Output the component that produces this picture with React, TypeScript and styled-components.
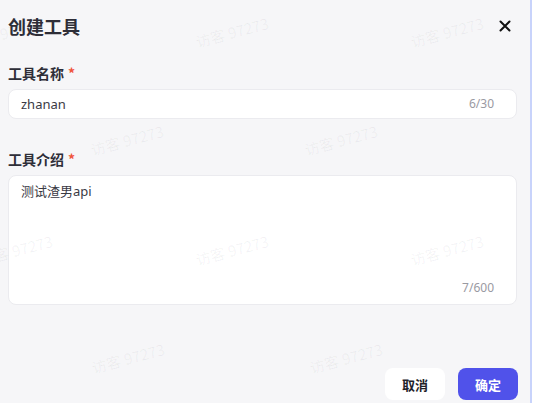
import React from "react";
import styled, { createGlobalStyle } from "styled-components";

const Global = createGlobalStyle`
  html, body { margin: 0; padding: 0; background: #ffffff; }
  body { font-family: "Noto Sans", "Noto Sans CJK SC", sans-serif; }
  * { box-sizing: border-box; }
`;

const Frame = styled.div`
  position: relative;
  width: 532px;
  height: 403px;
  background: #f6f6f8;
  border-right: 2px solid #c8d3fb;
  overflow: hidden;
  display: flex;
  flex-direction: column;
  padding: 14px 13px 3px 8px;
`;

const Header = styled.div`
  display: flex;
  align-items: center;
  justify-content: space-between;
  height: 24px;
`;

const Title = styled.h1`
  margin: 0;
  font-size: 18px;
  line-height: 24px;
  font-weight: 700;
  color: #2e2e38;
  font-family: "Noto Sans CJK SC", sans-serif;
`;

const Close = styled.button`
  border: none;
  background: none;
  padding: 0;
  margin-right: 5px;
  width: 14px;
  height: 14px;
  display: flex;
  align-items: center;
  justify-content: center;
  cursor: pointer;
`;

const Label = styled.div<{ $top: number }>`
  margin-top: ${(p) => p.$top}px;
  font-size: 14px;
  line-height: 20px;
  font-weight: 700;
  color: #2e2e38;
  font-family: "Noto Sans CJK SC", sans-serif;
  display: flex;
  align-items: center;
  gap: 4px;
`;

const Star = styled.span`
  color: #f0543c;
  font-size: 14px;
  font-weight: 700;
`;

const Field = styled.div<{ $height: number; $multi?: boolean }>`
  position: relative;
  margin-top: 6px;
  height: ${(p) => p.$height}px;
  background: #ffffff;
  border: 1px solid #ebebef;
  border-radius: 8px;
  padding: ${(p) => (p.$multi ? "6px 22px 0 12px" : "0 22px 0 12px")};
  display: flex;
  align-items: ${(p) => (p.$multi ? "flex-start" : "center")};
  justify-content: space-between;
`;

const Value = styled.span`
  font-size: 13px;
  line-height: 18px;
  color: #3a3a44;
  font-family: "Noto Sans", "Noto Sans CJK SC", sans-serif;
`;

const Count = styled.span<{ $multi?: boolean }>`
  font-size: 12px;
  line-height: 16px;
  color: #9a9aa2;
  font-family: "Noto Sans", sans-serif;
  ${(p) => (p.$multi ? "position: absolute; right: 22px; bottom: 8px;" : "")}
`;

const Footer = styled.div`
  margin-top: auto;
  display: flex;
  justify-content: flex-end;
  gap: 13px;
  padding-right: -1px;
  margin-right: -1px;
`;

const Button = styled.button<{ $primary?: boolean }>`
  width: 60px;
  height: 32px;
  border-radius: 8px;
  border: none;
  font-size: 13px;
  font-weight: 700;
  font-family: "Noto Sans CJK SC", sans-serif;
  background: ${(p) => (p.$primary ? "#5052ea" : "#ffffff")};
  color: ${(p) => (p.$primary ? "#ffffff" : "#22222a")};
  cursor: pointer;
`;

const Watermark = styled.span`
  position: absolute;
  transform: translate(-50%, -50%) rotate(-15deg);
  font-size: 15px;
  font-family: "Noto Sans CJK SC", sans-serif;
  color: rgba(60, 60, 80, 0.06);
  white-space: nowrap;
  pointer-events: none;
  user-select: none;
`;

const marks = [
  [4, 33],
  [232, 32],
  [447, 32],
  [127, 140],
  [341, 140],
  [16, 250],
  [232, 250],
  [447, 250],
  [128, 358],
  [346, 358],
];

export default function App() {
  return (
    <>
      <Global />
      <Frame>
        <Header>
          <Title>创建工具</Title>
          <Close aria-label="关闭">
            <svg width="12" height="12" viewBox="0 0 12 12">
              <path d="M1.5 1.5 L10.5 10.5 M10.5 1.5 L1.5 10.5" stroke="#111" strokeWidth="2" strokeLinecap="round" />
            </svg>
          </Close>
        </Header>
        <Label $top={25}>
          工具名称<Star>*</Star>
        </Label>
        <Field $height={30}>
          <Value>zhanan</Value>
          <Count>6/30</Count>
        </Field>
        <Label $top={30}>
          工具介绍<Star>*</Star>
        </Label>
        <Field $height={130} $multi>
          <Value>测试渣男api</Value>
          <Count $multi>7/600</Count>
        </Field>
        <Footer>
          <Button>取消</Button>
          <Button $primary>确定</Button>
        </Footer>
        {marks.map(([x, y], i) => (
          <Watermark key={i} style={{ left: x, top: y }}>
            访客 97273
          </Watermark>
        ))}
      </Frame>
    </>
  );
}
